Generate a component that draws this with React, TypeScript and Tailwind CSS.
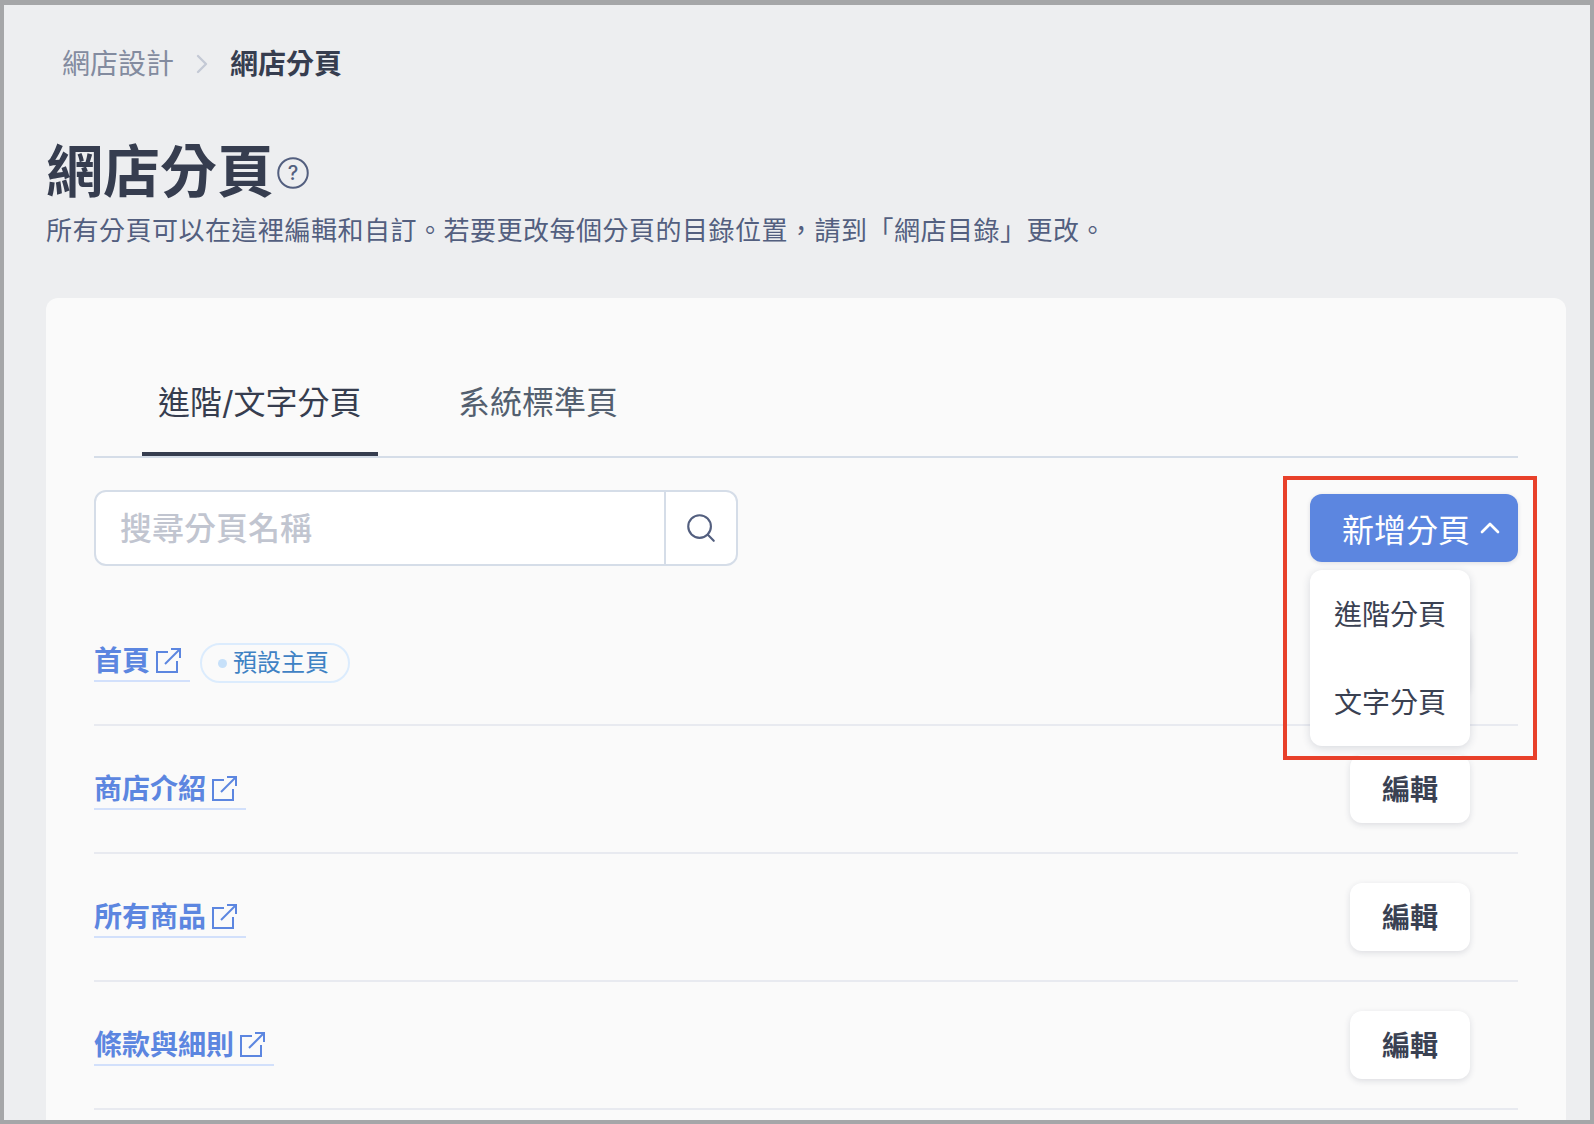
import React from "react";
import { ChevronRight, ChevronUp, Search } from "lucide-react";

const pages = [
  { id: 1, name: "首頁", isHome: true },
  { id: 2, name: "商店介紹" },
  { id: 3, name: "所有商品" },
  { id: 4, name: "條款與細則" },
];

const ExternalIcon = () => (
  <svg width="27" height="27" viewBox="0 0 27 27" fill="none" stroke="currentColor" strokeWidth="2" className="mb-[2px] ml-[5px] shrink-0">
    <path d="M13 5H2v20h20V14" />
    <path d="M10 17 25 2" />
    <path d="M16 2h9v9" />
  </svg>
);

const HelpIcon = () => (
  <svg width="32" height="32" viewBox="0 0 32 32" fill="none" className="ml-[3px] mt-[2px] text-[#535f7f]">
    <circle cx="16" cy="16" r="14.75" stroke="currentColor" strokeWidth="2" />
    <text x="16" y="23" textAnchor="middle" fontSize="20" fontWeight="500" fill="currentColor">?</text>
  </svg>
);

const PageRow = ({ name, isHome }: { name: string; isHome?: boolean }) => (
  <div className="flex h-[128px] items-center justify-between border-b-2 border-[#e8eaf0] pt-[2px]">
    <div className="flex items-center">
      <a className="flex h-[40px] items-center border-b-2 border-[#d2e0fb] pr-[8px] text-[28px] leading-[36px] font-bold text-[#5c86e0]">
        {name}
        <ExternalIcon />
      </a>
      {isHome && (
        <span className="ml-[10px] mt-[2px] flex h-[40px] w-[150px] items-center rounded-full border-2 border-[#dcecfd] pl-[16px] text-[24px] leading-[32px] text-[#3f82c4]">
          <span className="mr-[6px] h-[9px] w-[9px] rounded-full bg-[#c6e0f9]" />
          預設主頁
        </span>
      )}
    </div>
    <button className="mr-[48px] mb-[2px] h-[68px] w-[120px] rounded-[12px] bg-white pt-[2px] text-[28px] font-bold text-[#3a4152] shadow-[0_2px_6px_rgba(40,50,80,0.14)]">
      編輯
    </button>
  </div>
);

export default function App() {
  return (
    <div className="relative h-[1124px] overflow-hidden border-x-4 border-t-[5px] border-b-4 border-[#a5a6a8] bg-[#edeef0] font-['Inter','Noto_Sans_CJK_TC',sans-serif]">
      <nav className="mt-[41px] flex h-[36px] items-center pl-[58px] text-[28px] leading-[36px]">
        <span className="text-[#838b9f]">網店設計</span>
        <ChevronRight size={32} strokeWidth={1.75} className="mx-[12px] text-[#c4c9d5]" />
        <span className="font-bold text-[#363d4f]">網店分頁</span>
      </nav>

      <div className="mt-[54px] flex items-center pl-[42px]">
        <h1 className="text-[57px] leading-[72px] font-bold text-[#363d4f]">網店分頁</h1>
        <HelpIcon />
      </div>
      <p className="mt-[5px] pl-[42px] text-[26px] leading-[36px] tracking-[0.5px] text-[#535f7f]">
        {"所有分頁可以在這裡編輯和自訂。若要更改每個分頁的目錄位置\uFF0C請到「網店目錄」更改。"}
      </p>

      <main className="mt-[49px] ml-[42px] mr-[24px] h-[900px] rounded-t-[12px] bg-[#fafafa] px-[48px] pt-[65px]">
        <div className="flex h-[95px] border-b-2 border-[#d5dde8] pl-[48px]">
          <div className="h-[93px] w-[236px] border-b-4 border-[#363d4f] pl-[16px] pt-[20px] text-[32px] leading-[40px] text-[#363d4f]">
            進階/文字分頁
          </div>
          <div className="ml-[80px] pt-[20px] text-[32px] leading-[40px] text-[#535f6f]">系統標準頁</div>
        </div>

        <div className="mt-[32px] flex justify-between">
          <div className="flex h-[76px] w-[644px] rounded-[12px] border-2 border-[#d5dde8] bg-white">
            <div className="flex-1 pl-[24px] text-[32px] leading-[74px] font-medium text-[#c1c5d0]">搜尋分頁名稱</div>
            <div className="flex w-[72px] items-center justify-center border-l-2 border-[#d5dde8] text-[#535f7f]">
              <Search size={34} strokeWidth={1.5} />
            </div>
          </div>
          <button className="mt-[4px] flex h-[68px] w-[208px] items-center rounded-[12px] bg-[#5c86e0] pl-[32px] text-[32px] text-white shadow-[0_1px_4px_rgba(40,50,80,0.14)]">
            <span className="mt-[6px]">新增分頁</span>
            <ChevronUp size={32} strokeWidth={2} className="ml-[4px]" />
          </button>
        </div>

        <div className="mt-[32px]">
          {pages.map((page) => (
            <PageRow key={page.id} name={page.name} isHome={page.isHome} />
          ))}
        </div>
      </main>

      <div className="absolute top-[565px] left-[1306px] flex h-[176px] w-[160px] flex-col rounded-[12px] bg-white pt-[1px] text-[28px] text-[#3a4152] shadow-[0_2px_8px_rgba(40,50,80,0.16)]">
        <div className="flex h-[88px] shrink-0 items-center justify-center">進階分頁</div>
        <div className="flex h-[88px] shrink-0 items-center justify-center">文字分頁</div>
      </div>
      <div className="absolute top-[471px] left-[1279px] h-[284px] w-[254px] border-4 border-[#e8402a]" />
    </div>
  );
}
